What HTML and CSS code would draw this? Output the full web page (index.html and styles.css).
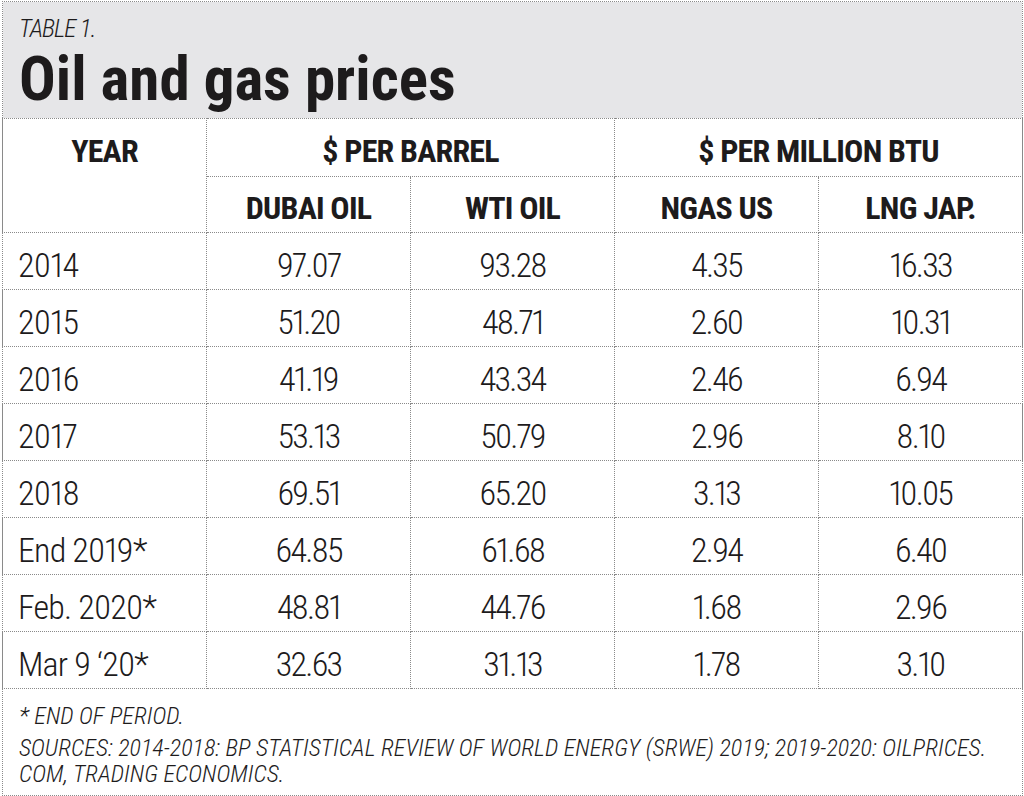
FILE: index.html
```html
<!DOCTYPE html>
<html lang="en">
<head>
<meta charset="utf-8">
<title>Table 1. Oil and gas prices</title>
<link rel="stylesheet" href="styles.css">
</head>
<body>
<div class="card">
  <div class="head">
    <div class="label">TABLE 1.</div>
    <h1 class="title">Oil and gas prices</h1>
  </div>
  <table class="prices">
    <colgroup>
      <col class="c-year"><col class="c-num"><col class="c-num"><col class="c-num"><col class="c-last">
    </colgroup>
    <thead>
      <tr class="h1">
        <th rowspan="2" class="year-h">YEAR</th>
        <th colspan="2">$ PER BARREL</th>
        <th colspan="2">$ PER MILLION BTU</th>
      </tr>
      <tr class="h2">
        <th>DUBAI OIL</th>
        <th>WTI OIL</th>
        <th>NGAS US</th>
        <th>LNG JAP.</th>
      </tr>
    </thead>
    <tbody>
      <tr><td>2014</td><td>97.07</td><td>93.28</td><td>4.35</td><td>16.33</td></tr>
      <tr><td>2015</td><td>51.20</td><td>48.71</td><td>2.60</td><td>10.31</td></tr>
      <tr><td>2016</td><td>41.19</td><td>43.34</td><td>2.46</td><td>6.94</td></tr>
      <tr><td>2017</td><td>53.13</td><td>50.79</td><td>2.96</td><td>8.10</td></tr>
      <tr><td>2018</td><td>69.51</td><td>65.20</td><td>3.13</td><td>10.05</td></tr>
      <tr><td>End 2019*</td><td>64.85</td><td>61.68</td><td>2.94</td><td>6.40</td></tr>
      <tr><td>Feb. 2020*</td><td>48.81</td><td>44.76</td><td>1.68</td><td>2.96</td></tr>
      <tr><td>Mar 9 ‘20*</td><td>32.63</td><td>31.13</td><td>1.78</td><td>3.10</td></tr>
    </tbody>
  </table>
  <div class="foot">
    <p class="note">* END OF PERIOD.</p>
    <p class="src">SOURCES: 2014-2018: BP STATISTICAL REVIEW OF WORLD ENERGY (SRWE) 2019; 2019-2020: OILPRICES.<br>COM, TRADING ECONOMICS.</p>
  </div>
</div>
</body>
</html>
```
FILE: styles.css
```css
html, body {
  margin: 0;
  padding: 0;
  background: #ffffff;
}
body {
  font-family: "Roboto Condensed", Roboto, "Liberation Sans", sans-serif;
  font-stretch: condensed;
  color: #1d1b1c;
}
.card {
  box-sizing: border-box;
  width: 1021px;
  height: 795px;
  margin: 1px 0 0 2px;
  border: 1px dotted #8a8a8a;
  display: flex;
  flex-direction: column;
}
.head {
  background: #e6e6e8;
  padding: 14px 16px 8px;
  display: flex;
  flex-direction: column;
  gap: 8px;
}
.label {
  font-size: 25px;
  line-height: 25px;
  font-weight: 300;
  font-style: italic;
  letter-spacing: -1px;
}
.title {
  margin: 0;
  font-size: 61px;
  line-height: 61px;
  font-weight: 700;
}
.prices {
  table-layout: fixed;
  border-collapse: collapse;
  margin-left: -1px;
  width: calc(100% + 2px);
}
.c-year { width: 204px; }
.c-num { width: 204px; }
.prices th, .prices td {
  border: 1px dotted #8a8a8a;
  padding: 0;
  text-align: center;
}
.prices th {
  font-size: 32px;
  line-height: 32px;
  font-weight: 700;
  letter-spacing: -0.8px;
}
.h1 th { padding: 16px 0 9px; vertical-align: top; }
.h2 th { padding: 15px 0 8px; }
.year-h { vertical-align: top; }
.prices td {
  font-size: 34px;
  line-height: 34px;
  font-weight: 300;
  padding: 15px 0 7px;
  font-variant-numeric: proportional-nums;
  letter-spacing: -1.8px;
}
.prices td:first-child {
  text-align: left;
  padding-left: 15px;
  letter-spacing: -0.8px;
}
.foot {
  flex: 1;
  padding: 14px 16px 0;
  font-size: 24px;
  line-height: 26px;
  font-weight: 300;
  font-style: italic;
  letter-spacing: 0.05px;
}
.foot p { margin: 0; }
.foot .note { margin-bottom: 6px; }
```
